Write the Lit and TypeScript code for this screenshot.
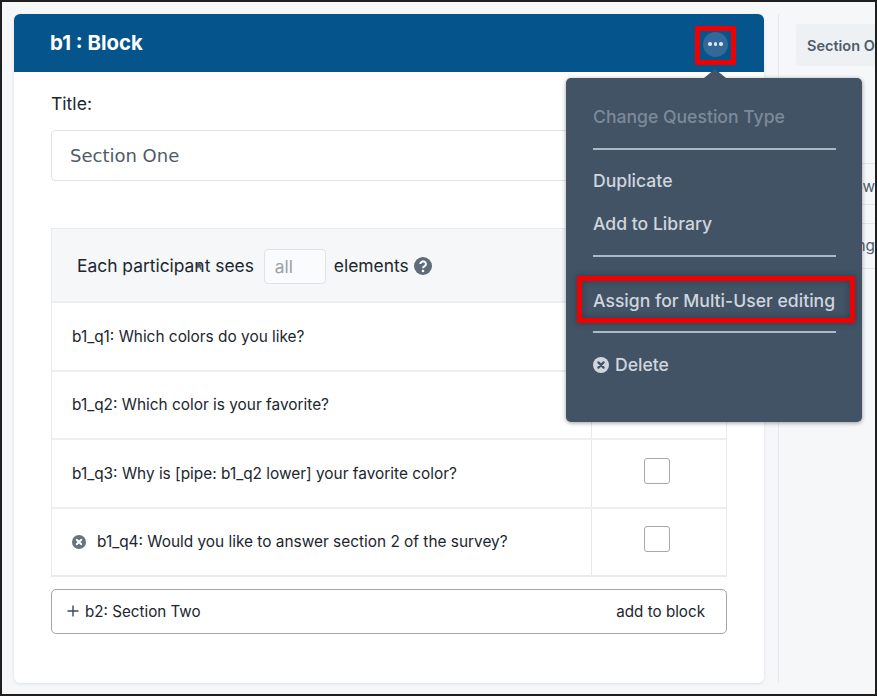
import { LitElement, css, html } from "lit";
import { customElement } from "lit/decorators.js";

const rows = [
  { text: "b1_q1: Which colors do you like?" },
  { text: "b1_q2: Which color is your favorite?" },
  { text: "b1_q3: Why is [pipe: b1_q2 lower] your favorite color?", box: true },
  { text: "b1_q4: Would you like to answer section 2 of the survey?", box: true, removable: true },
];

const xIcon = (size: number, disc: string, cross: string) => html`
  <svg width=${size} height=${size} viewBox="0 0 16 16">
    <circle cx="8" cy="8" r="8" fill=${disc}></circle>
    <path d="M5.4 5.4l5.2 5.2M10.6 5.4l-5.2 5.2" stroke=${cross} stroke-width="2.2" stroke-linecap="round"></path>
  </svg>
`;

@customElement("app-root")
export class AppRoot extends LitElement {
  static styles = css`
    :host {
      display: block;
      width: 877px;
      height: 696px;
      font-family: "Inter", "Liberation Sans", sans-serif;
    }
    .frame {
      position: relative;
      box-sizing: border-box;
      width: 877px;
      height: 696px;
      border: 2px solid #1f1f1f;
      background: #f5f7f9;
      padding: 12px 0 11px 12px;
      display: flex;
      overflow: hidden;
    }
    .card {
      width: 750px;
      flex: none;
      background: #fff;
      border-radius: 6px;
      box-shadow: 0 1px 3px rgba(50, 60, 70, 0.12);
    }
    .head {
      box-sizing: border-box;
      height: 58px;
      background: #05558c;
      border-radius: 6px 6px 0 0;
      display: flex;
      align-items: center;
      justify-content: space-between;
      padding: 0 28px 2px 36px;
      color: #fff;
      font-size: 20.4px;
      font-weight: 700;
    }
    .more {
      box-sizing: border-box;
      width: 41px;
      height: 39px;
      margin-top: 7px;
      padding-bottom: 3px;
      border: 5px solid #f00000;
      display: flex;
      align-items: center;
      justify-content: center;
    }
    .dots {
      flex: none;
      width: 25px;
      height: 25px;
      border-radius: 50%;
      background: #33689a;
      display: flex;
      align-items: center;
      justify-content: center;
      gap: 2px;
    }
    .dots i {
      width: 3.5px;
      height: 3.5px;
      border-radius: 50%;
      background: #dce8f4;
    }
    .body {
      padding: 22px 37px 0 37px;
    }
    .label {
      font-size: 17.6px;
      color: #20262e;
      line-height: 20px;
    }
    .title {
      margin-top: 16px;
      height: 51px;
      box-sizing: border-box;
      border: 1px solid #dfe3e7;
      border-radius: 4px;
      padding: 0 18px;
      display: flex;
      align-items: center;
      font-family: "DejaVu Sans", sans-serif;
      font-size: 18px;
      color: #4f5b68;
    }
    .table {
      margin-top: 47px;
      border: 1px solid #e8ebee;
      border-bottom-width: 2px;
    }
    .sees {
      height: 72px;
      background: #f5f7f9;
      display: flex;
      align-items: center;
      padding-left: 25px;
      font-size: 17.4px;
      color: #20262e;
    }
    .count {
      width: 62px;
      height: 35px;
      box-sizing: border-box;
      margin: 3px 8px 0 10px;
      padding-left: 10px;
      border: 1px solid #dfe3e7;
      border-radius: 4px;
      background: #fafbfc;
      display: flex;
      align-items: center;
      color: #9aa0a6;
    }
    .help {
      margin: 2px 0 0 5px;
      display: flex;
    }
    .row {
      box-sizing: border-box;
      height: 68.5px;
      border-top: 2px solid #eceef0;
      display: grid;
      grid-template-columns: 540px 1fr;
      font-size: 15.4px;
      color: #20262e;
    }
    .q {
      display: flex;
      align-items: center;
      gap: 11px;
      padding-left: 20px;
      border-right: 1px solid #e6e9ec;
    }
    .q svg {
      flex: none;
    }
    .tick {
      display: flex;
      align-items: center;
      justify-content: center;
      padding: 0 5px 5px 0;
    }
    .box {
      width: 26px;
      height: 26px;
      box-sizing: border-box;
      border: 1.5px solid #a5a9ae;
      border-radius: 3px;
      background: #fff;
    }
    .add {
      margin-top: 12px;
      height: 44.5px;
      box-sizing: border-box;
      border: 1px solid #a2a7ad;
      border-radius: 5px;
      display: flex;
      align-items: center;
      justify-content: space-between;
      padding: 0 21px 0 15px;
      font-size: 15.2px;
      color: #20262e;
    }
    .add .name {
      display: flex;
      align-items: center;
      gap: 6px;
    }
    .side {
      margin-left: 14px;
      flex: 1;
      min-width: 0;
      border-left: 1px solid #e6e9ec;
      padding-top: 10px;
      padding-left: 17px;
      overflow: hidden;
      white-space: nowrap;
    }
    .chip {
      height: 42px;
      background: #eef1f4;
      border-radius: 3px 0 0 3px;
      padding-left: 11px;
      display: flex;
      align-items: center;
      overflow: hidden;
      font-size: 14.5px;
      font-weight: 600;
      color: #4f5b68;
    }
    .opts {
      margin-top: 97px;
      font-size: 15.4px;
      color: #4f5b68;
      text-align: right;
    }
    .opts div {
      border-top: 1px solid #e3e6e9;
    }
    .opts .show {
      height: 40px;
      line-height: 46px;
    }
    .opts .gap {
      height: 18px;
    }
    .opts .paging {
      height: 44px;
      line-height: 44px;
    }
    .opts .end {
      height: 0;
    }
    .menu {
      position: absolute;
      left: 564px;
      top: 76px;
      width: 296px;
      height: 344px;
      box-sizing: border-box;
      background: #425366;
      border-radius: 5px;
      box-shadow: 0 1px 4px rgba(30, 40, 50, 0.45);
      padding: 27px 26px 0 27px;
      font-size: 17.6px;
      font-weight: 500;
      color: #cfd6de;
    }
    .menu::before {
      content: "";
      position: absolute;
      left: 138px;
      top: -9px;
      border: 11px solid transparent;
      border-top-width: 0;
      border-bottom: 9px solid #425366;
    }
    .item {
      line-height: 24px;
      white-space: nowrap;
    }
    .muted {
      color: #7d8a99;
    }
    .menu hr {
      margin: 0;
      border: 0;
      height: 2px;
      background: #aeb9c5;
    }
    .menu hr.sep1,
    .menu hr.sep2 {
      margin-top: 19px;
    }
    .dup,
    .lib {
      margin-top: 19px;
    }
    .assign {
      position: relative;
      margin-top: 32px;
    }
    .assign::before {
      content: "";
      position: absolute;
      left: -16px;
      right: -19px;
      top: -13px;
      bottom: -10px;
      border: 5px solid #f00000;
      box-shadow: 0 0 6px rgba(20, 30, 40, 0.45), inset 0 0 6px rgba(20, 30, 40, 0.4);
    }
    .menu hr.sep3 {
      margin-top: 18px;
    }
    .del {
      margin-top: 20px;
      display: flex;
      align-items: center;
      gap: 6px;
    }
    .cursor {
      position: absolute;
      left: 195px;
      top: 260px;
    }
  `;

  render() {
    return html`
      <div class="frame">
        <section class="card">
          <header class="head">
            <span>b1 : Block</span>
            <span class="more"><span class="dots"><i></i><i></i><i></i></span></span>
          </header>
          <div class="body">
            <div class="label">Title:</div>
            <div class="title">Section One</div>
            <div class="table">
              <div class="sees">
                Each participant sees
                <span class="count">all</span>
                elements
                <span class="help">
                  <svg width="18" height="18" viewBox="0 0 18 18">
                    <circle cx="9" cy="9" r="9" fill="#5d6b7a"></circle>
                    <path d="M6.3 7a2.8 2.6 0 1 1 4.3 2.2c-1 .6-1.6 1-1.6 2.1" fill="none" stroke="#fff" stroke-width="2"></path>
                    <circle cx="9" cy="14" r="1.3" fill="#fff"></circle>
                  </svg>
                </span>
              </div>
              ${rows.map(
                (r) => html`
                  <div class="row">
                    <div class="q">
                      ${r.removable ? xIcon(14, "#66727f", "#fff") : ""}
                      <span>${r.text}</span>
                    </div>
                    <div class="tick">${r.box ? html`<span class="box"></span>` : ""}</div>
                  </div>
                `
              )}
            </div>
            <div class="add">
              <span class="name">
                <svg width="12" height="12" viewBox="0 0 12 12">
                  <path d="M6 .5v11M.5 6h11" stroke="#3d4956" stroke-width="1.4"></path>
                </svg>
                b2: Section Two
              </span>
              <span>add to block</span>
            </div>
          </div>
        </section>
        <aside class="side">
          <div class="chip">Section One</div>
          <div class="opts">
            <div class="show">Show</div>
            <div class="gap"></div>
            <div class="paging">Paging</div>
            <div class="end"></div>
          </div>
        </aside>
        <nav class="menu">
          <div class="item muted">Change Question Type</div>
          <hr class="sep1" />
          <div class="item dup">Duplicate</div>
          <div class="item lib">Add to Library</div>
          <hr class="sep2" />
          <div class="item assign">Assign for Multi-User editing</div>
          <hr class="sep3" />
          <div class="item del">${xIcon(16, "#cfd6de", "#425366")}Delete</div>
        </nav>
        <svg class="cursor" width="7" height="8" viewBox="0 0 7 8">
          <path d="M0 0l6 4-2.5.6L5 7.5 3.6 8 2.2 5.2 0 6.5z" fill="#4f5b68"></path>
        </svg>
      </div>
    `;
  }
}
